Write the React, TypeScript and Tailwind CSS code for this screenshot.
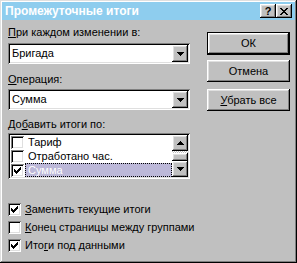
import React from "react";

const raised =
  "shadow-[inset_-1px_-1px_#000000,inset_1px_1px_#ffffff,inset_-2px_-2px_#808080,inset_2px_2px_#dfdfdf]";
const sunken =
  "shadow-[inset_1px_1px_#808080,inset_-1px_-1px_#ffffff,inset_2px_2px_#000000,inset_-2px_-2px_#dfdfdf]";

function Arrow({ up = false }: { up?: boolean }) {
  return (
    <svg width="7" height="4" viewBox="0 0 7 4" shapeRendering="crispEdges" className={up ? "rotate-180" : ""}>
      <rect x="0" y="0" width="7" height="1" fill="#000" />
      <rect x="1" y="1" width="5" height="1" fill="#000" />
      <rect x="2" y="2" width="3" height="1" fill="#000" />
      <rect x="3" y="3" width="1" height="1" fill="#000" />
    </svg>
  );
}

function Check() {
  return (
    <svg width="7" height="7" viewBox="0 0 7 7" shapeRendering="crispEdges">
      <path d="M0 2h1v3h-1zM1 3h1v3h-1zM2 4h1v3h-1zM3 3h1v3h-1zM4 2h1v3h-1zM5 1h1v3h-1zM6 0h1v3h-1z" fill="#000" />
    </svg>
  );
}

function Box({ checked }: { checked: boolean }) {
  return (
    <div className={`w-[13px] h-[13px] bg-white flex items-center justify-center shrink-0 ${sunken}`}>
      {checked && <Check />}
    </div>
  );
}

function Combo({ value }: { value: string }) {
  return (
    <div className={`h-[21px] bg-white flex items-center p-[2px] ${sunken}`}>
      <span className="flex-1 pl-[2px] leading-[13px]">{value}</span>
      <div className={`w-[16px] h-[17px] bg-[#c0c0c0] flex items-center justify-center ${raised}`}>
        <Arrow />
      </div>
    </div>
  );
}

function Btn({ children, def = false }: { children: React.ReactNode; def?: boolean }) {
  return (
    <div className={def ? "border border-black h-[23px]" : "h-[22px]"}>
      <div className={`h-full bg-[#c0c0c0] flex items-center justify-center ${raised}`}>{children}</div>
    </div>
  );
}

const rows = [
  { label: "Тариф", checked: false },
  { label: "Отработано час.", checked: false },
  { label: "Сумма", checked: true, selected: true },
];

export default function App() {
  return (
    <div
      className="w-[297px] h-[263px] bg-[#c0c0c0] p-[2px] text-[11px] text-black shadow-[inset_-1px_-1px_#000000,inset_1px_1px_#dfdfdf,inset_-2px_-2px_#808080,inset_2px_2px_#ffffff]"
      style={{ fontFamily: '"Liberation Sans", Arial, sans-serif' }}
    >
      {/* заголовок */}
      <div className="h-[18px] bg-[#8ecdee] flex items-center justify-between pl-[3px] pr-[3px]">
        <span className="text-white font-bold text-[12px] leading-[14px]">Промежуточные итоги</span>
        <div className="flex">
          <div className={`w-[16px] h-[14px] bg-[#c0c0c0] flex items-center justify-center font-bold text-[11px] leading-none ${raised}`}>?</div>
          <div className={`w-[16px] h-[14px] bg-[#c0c0c0] flex items-center justify-center ${raised}`}>
            <svg width="8" height="7" viewBox="0 0 8 7" shapeRendering="crispEdges">
              <path d="M0 0h2v1h-2zM6 0h2v1h-2zM1 1h2v1h-2zM5 1h2v1h-2zM2 2h4v1h-4zM3 3h2v1h-2zM2 4h4v1h-4zM1 5h2v1h-2zM5 5h2v1h-2zM0 6h2v1h-2zM6 6h2v1h-2z" fill="#000" />
            </svg>
          </div>
        </div>
      </div>

      <div className="flex pl-[6px]">
        <div className="w-[182px] flex flex-col">
          <div className="mt-[6px] h-[13px] leading-[13px]">
            <u>П</u>ри каждом изменении в:
          </div>
          <div className="mt-[4px]">
            <Combo value="Бригада" />
          </div>
          <div className="mt-[9px] h-[13px] leading-[13px]">
            <u>О</u>перация:
          </div>
          <div className="mt-[3px]">
            <Combo value="Сумма" />
          </div>
          <div className="mt-[8px] h-[13px] leading-[13px]">
            До<u>б</u>авить итоги по:
          </div>
          <div className={`mt-[2px] h-[46px] bg-white p-[2px] flex ${sunken}`}>
            <div className="flex-1 flex flex-col">
              {rows.map((r) => (
                <div key={r.label} className="h-[14px] flex items-center pl-[1px]">
                  <Box checked={r.checked} />
                  <span
                    className={`ml-[1px] flex-1 h-[14px] leading-[12px] pl-[2px] ${
                      r.selected ? "bg-[#bcb8d8] text-white border border-dotted border-black" : "border border-transparent"
                    }`}
                  >
                    {r.label}
                  </span>
                </div>
              ))}
            </div>
            <div className="w-[16px] flex flex-col">
              <div className={`h-[16px] bg-[#c0c0c0] flex items-center justify-center ${raised}`}>
                <Arrow up />
              </div>
              <div className="flex-1 flex flex-col bg-[repeating-conic-gradient(#ffffff_0_25%,#c0c0c0_0_50%)] bg-[length:2px_2px]">
                <div className="flex-1" />
                <div className={`h-[8px] bg-[#c0c0c0] ${raised}`} />
              </div>
              <div className={`h-[16px] bg-[#c0c0c0] flex items-center justify-center ${raised}`}>
                <Arrow />
              </div>
            </div>
          </div>

          <div className="mt-[21px] flex flex-col whitespace-nowrap">
            <div className="h-[18px] flex items-center gap-[4px]">
              <Box checked />
              <span><u>З</u>аменить текущие итоги</span>
            </div>
            <div className="h-[18px] flex items-center gap-[4px]">
              <Box checked={false} />
              <span><u>К</u>онец страницы между группами</span>
            </div>
            <div className="h-[18px] flex items-center gap-[4px]">
              <Box checked />
              <span>Ито<u>г</u>и под данными</span>
            </div>
          </div>
        </div>

        <div className="w-[83px] ml-[17px] flex flex-col">
          <div className="mt-[12px]">
            <Btn def>ОК</Btn>
          </div>
          <div className="mt-[5px]">
            <Btn>Отмена</Btn>
          </div>
          <div className="mt-[7px]">
            <Btn>
              <span><u>У</u>брать все</span>
            </Btn>
          </div>
        </div>
      </div>
    </div>
  );
}
